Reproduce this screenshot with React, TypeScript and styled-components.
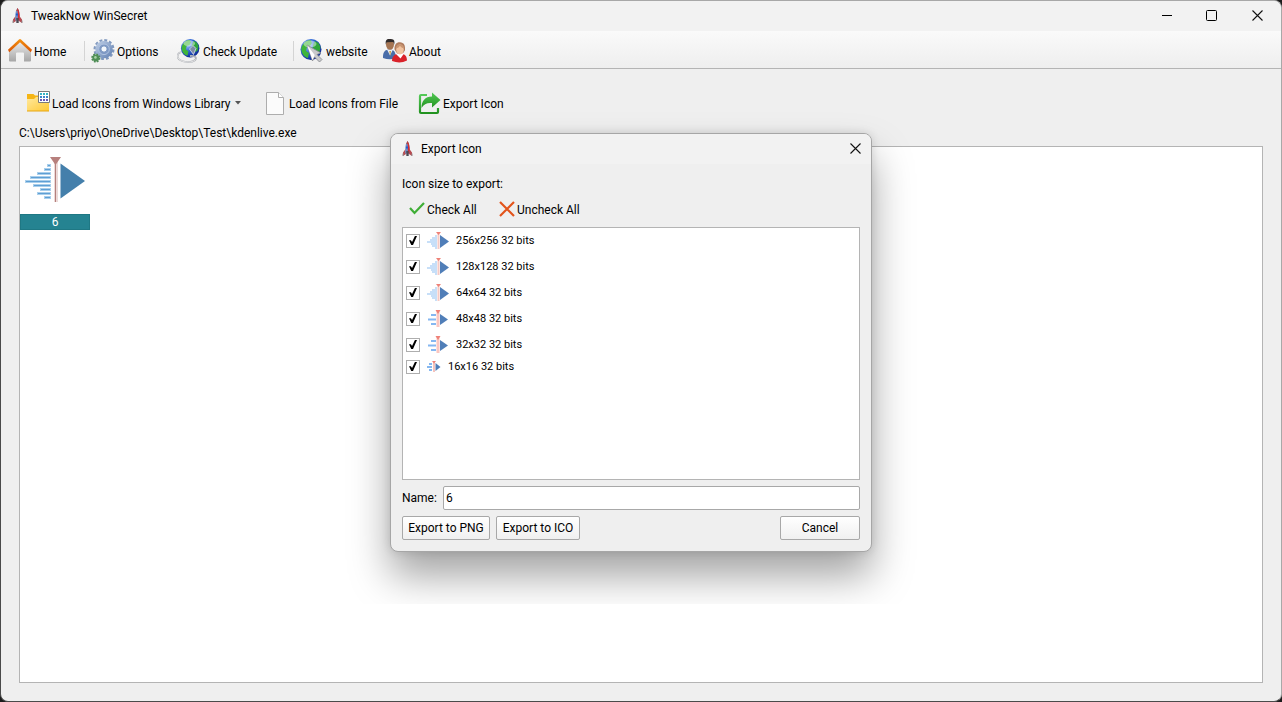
import React from "react";
import styled, { createGlobalStyle } from "styled-components";

const GlobalStyle = createGlobalStyle`
  * { box-sizing: border-box; }
  body {
    margin: 0;
    background: #1c1c1c;
    font: 12px/16px Roboto, "Noto Sans", sans-serif;
    color: #000;
  }
  button, input { font: inherit; color: inherit; }
`;

const Window = styled.div`
  display: flex;
  flex-direction: column;
  min-height: 100vh;
  border: 1px solid #4a4a4a;
  border-top-color: #a8a8a8;
  border-right-color: #a8a8a8;
  border-radius: 8px;
  background: #efefef;
  overflow: hidden;
`;

const TitleBar = styled.header`
  display: flex;
  align-items: center;
  height: 30px;
  padding-left: 11px;
  background: #f2f2f2;
`;

const Title = styled.h1`
  flex: 1;
  margin: 0 0 0 8px;
  font-size: 12px;
  font-weight: 400;
`;

const CaptionButton = styled.button<{ $width: number }>`
  display: grid;
  place-items: center;
  width: ${(p) => p.$width}px;
  height: 30px;
  padding: 0 1px 2px 0;
  border: 0;
  background: none;
`;

const MenuBar = styled.nav`
  display: flex;
  align-items: center;
  height: 38px;
  padding: 2px 7px 0;
  border-bottom: 1px solid #b4b4b4;
  background: linear-gradient(#fafafa, #eeeeee);
`;

const Tool = styled.button<{ $width?: number; $gap?: number }>`
  display: flex;
  flex: none;
  align-items: center;
  gap: ${(p) => p.$gap ?? 2}px;
  width: ${(p) => (p.$width ? `${p.$width}px` : "auto")};
  height: 26px;
  padding: 0;
  border: 0;
  background: none;
  white-space: nowrap;
  svg { flex: none; }
  span { padding-top: 2px; }
`;

const Divider = styled.span`
  width: 1px;
  height: 20px;
  margin-right: 6px;
  background: #d4d4d4;
`;

const Main = styled.main`
  display: flex;
  flex: 1;
  flex-direction: column;
  padding: 21px 18px 18px;
`;

const Actions = styled.div`
  display: flex;
  padding-left: 7px;
`;

const Path = styled.p`
  margin: 9px 0 5px;
`;

const Gallery = styled.section`
  flex: 1;
  border: 1px solid #b4b4b4;
  background: #fff;
`;

const Tile = styled.figure`
  display: flex;
  flex-direction: column;
  align-items: center;
  width: 70px;
  margin: 0;
  padding-top: 8px;
`;

const TileName = styled.figcaption`
  align-self: stretch;
  margin-top: 11px;
  border: 1px solid #1f7884;
  background: #258391;
  color: #fff;
  line-height: 14px;
  text-align: center;
`;

/* Limits how far the dialog's shadow reaches. */
const DialogLayer = styled.div`
  position: absolute;
  top: 94px;
  left: 331px;
  padding: 39px 59px 52px;
  overflow: hidden;
  pointer-events: none;
`;

const Dialog = styled.section`
  width: 482px;
  border: 1px solid #a6a6a6;
  border-radius: 8px;
  background: #efefef;
  box-shadow: 0 24px 40px rgba(0, 0, 0, 0.36), 0 0 10px rgba(0, 0, 0, 0.12);
  pointer-events: auto;
`;

const DialogBar = styled(TitleBar)`
  border-radius: 7px 7px 0 0;
`;

const DialogTitle = styled(Title).attrs({ as: "h2" })``;

const DialogBody = styled.form`
  display: flex;
  flex-direction: column;
  padding: 12px 11px 11px;
`;

const Checks = styled.div`
  display: flex;
  margin: 0 0 5px;
  padding: 4px 0 0 7px;
`;

const SizeList = styled.ul`
  height: 253px;
  margin: 0;
  padding: 0 3px;
  border: 1px solid #b4b4b4;
  background: #fff;
  font-size: 11px;
  list-style: none;
`;

const SizeRow = styled.li<{ $small?: boolean }>`
  height: ${(p) => (p.$small ? 18 : 26)}px;
  label {
    display: flex;
    align-items: center;
    gap: 7px;
    height: 100%;
  }
`;

const Tick = styled.input.attrs({ type: "checkbox" })`
  appearance: none;
  width: 14px;
  height: 14px;
  margin: 0;
  border: 1px solid #aeaeae;
  background: #fff;
  &:checked::after {
    content: "";
    display: block;
    width: 8px;
    height: 9px;
    margin: 1px 2px;
    background: #000;
    clip-path: polygon(0 48%, 24% 48%, 38% 66%, 74% 0, 100% 0, 50% 100%, 28% 100%);
  }
`;

const NameRow = styled.div`
  display: flex;
  align-items: center;
  gap: 6px;
  margin: 6px 0;
  label { width: 35px; }
`;

const NameInput = styled.input`
  flex: 1;
  min-width: 0;
  height: 24px;
  padding: 0 2px;
  border: 1px solid #a8a8a8;
  border-radius: 2px;
  background: #fff;
  outline: none;
`;

const Footer = styled.div`
  display: flex;
  gap: 6px;
`;

const PushButton = styled.button<{ $width: number; $end?: boolean }>`
  width: ${(p) => p.$width}px;
  height: 24px;
  margin-left: ${(p) => (p.$end ? "auto" : 0)};
  padding: 0;
  border: 1px solid #a8a8a8;
  border-radius: 2px;
  background: linear-gradient(#ffffff, #f0f0f0);
  white-space: nowrap;
`;

const Rocket = () => (
  <svg width="11" height="16" viewBox="0 0 11 16" aria-hidden="true">
    <path d="M3.6 8 1 11.5V15l3-2zM7.4 8 10 11.5V15l-3-2z" fill="#b64b50" />
    <path d="M1 12.5V15M10 12.5V15" stroke="#8d8d90" />
    <path d="M5.5 0C3.5 3 3 6 3.3 12.5h4.4C8 6 7.5 3 5.5 0z" fill="#6d8cc4" />
    <path d="M5.5 0C6.8 2 8 5 7.7 12.5H6z" fill="#d82a2e" />
    <path d="M5.5 0 4.2 3h2.6z" fill="#b9433f" />
    <path d="M4 5.5h2v2H4z" fill="#245bd0" />
    <path d="M4.3 10h2.4v5H4.3z" fill="#4d4b55" />
  </svg>
);

const HomeIcon = () => (
  <svg width="24" height="24" viewBox="0 0 24 24" aria-hidden="true">
    <defs>
      <linearGradient id="wall" x2="0" y2="1"><stop stopColor="#ececec" /><stop offset="1" stopColor="#a6a6a6" /></linearGradient>
      <linearGradient id="roof" x2="0" y2="1"><stop stopColor="#f5930f" /><stop offset="1" stopColor="#d95405" /></linearGradient>
    </defs>
    <path d="M12 2.500 1 12v9.500q0 1 1 1H8v-8q0-1 1-1h6q1 0 1 1v8h6q1 0 1-1V12z" fill="url(#wall)" />
    <path d="M0 10.800 11 .500q1-.9 2 0l11 10.300-1.200 2.400L12 3.300 1.200 13.200z" fill="url(#roof)" />
  </svg>
);

const GearIcon = () => (
  <svg width="24" height="24" viewBox="0 0 24 24" aria-hidden="true">
    <defs>
      <linearGradient id="gear" x2="1" y2="1"><stop stopColor="#c3d2e8" /><stop offset="1" stopColor="#5f7fb2" /></linearGradient>
    </defs>
    <circle cx="13" cy="10.500" r="9.300" fill="none" stroke="#8199bf" strokeWidth="2.400" strokeDasharray="2.900 1.970" />
    <circle cx="13" cy="10.500" r="8.700" fill="url(#gear)" />
    <circle cx="13" cy="10.300" r="5.300" fill="#7f9ac6" stroke="#afc2df" />
    <circle cx="13" cy="10" r="3.200" fill="#f2f6fb" stroke="#6f8dbb" />
    <circle cx="4.800" cy="19" r="3.600" fill="none" stroke="#4d8b54" strokeWidth="2" strokeDasharray="1.700 1.130" />
    <circle cx="4.800" cy="19" r="3.400" fill="#4f8f56" />
    <circle cx="4.400" cy="18.400" r="1.300" fill="#a9d3a5" />
  </svg>
);

const Globe = ({ id }: { id: string }) => (
  <>
    <defs>
      <radialGradient id={id} cx=".35" cy=".3" r=".8">
        <stop stopColor="#a8ccfb" /><stop offset=".45" stopColor="#2f66d4" /><stop offset="1" stopColor="#0a1f86" />
      </radialGradient>
    </defs>
    <circle cx="11" cy="10.500" r="10.500" fill={`url(#${id})`} />
    <path d="M2 7C4 3 7 1 10.500 1L12 4l-2 3-3 1-1 4 3 2-1 5C4 18 1 14 1.300 9z" fill="#3fb53a" />
    <path d="m15 2 3.500 2 2 4-1 5-3 2-1-4-3-2 1-4z" fill="#2fa63a" />
    <ellipse cx="10" cy="5" rx="6.500" ry="3.500" fill="#fff" opacity=".45" />
  </>
);

const UpdateIcon = () => (
  <svg width="24" height="24" viewBox="0 0 24 24" aria-hidden="true">
    <g transform="translate(3.500 0) scale(.88)"><Globe id="sea-a" /></g>
    <path d="M4 13C-1 15-.5 20 5 22s12 1 13.500-1.500S17 16.500 13 17" fill="none" stroke="#b0b3b8" strokeWidth="1.800" />
    <path d="M4 13C-1 15-.5 20 5 22s12 1 13.500-1.500" fill="none" stroke="#f6f6f6" strokeWidth=".7" />
    <path d="M12.500 10 16 6.500l3 3-2.500 6z" fill="#7d8aa5" stroke="#dde2ec" strokeWidth=".8" />
  </svg>
);

const WebsiteIcon = () => (
  <svg width="24" height="24" viewBox="0 0 24 24" aria-hidden="true">
    <Globe id="sea-b" />
    <path d="m7 6 14 8-4 1.500 5 5-2.500 2.500-5-5-2 4z" fill="#c9cacc" stroke="#85888e" strokeWidth=".8" />
    <path d="m7 6 5.500 15 2.200-5z" fill="#fff" />
  </svg>
);

const PeopleIcon = () => (
  <svg width="24" height="24" viewBox="0 0 24 24" aria-hidden="true">
    <path d="M0 19c-.3-6 2-8.500 6.500-8.500s6 2 6.500 8.500q-6 2.500-13 0z" fill="#496da9" />
    <path d="m4 10.500 3 6 3-6z" fill="#e9eef5" />
    <path d="M6.300 12H8l-.8 5z" fill="#c79b35" />
    <ellipse cx="7" cy="5.500" rx="4" ry="5.200" fill="#a57553" />
    <path d="M2.800 5.500C2 .5 4.500-.6 7.500 0 11 0 12 1.500 11.200 5.500l-1-2.500-6.500.3z" fill="#302b2b" />
    <path d="M11.500 10.500c-.3-5 2-7.500 5.500-7.300 4 .2 5.500 3 5 8l-2 3h-6z" fill="#b17d5f" />
    <path d="M9 22c0-5 3-7.500 8-7.500 4.500 0 6.700 2 7 7q-7 3.500-15 .5z" fill="#d9222a" />
    <path d="m13 15 4.500 4.500L21 14.500z" fill="#fff" />
    <ellipse cx="17" cy="10.500" rx="3.800" ry="5" fill="#f1c3a0" />
    <path d="M13 9.500c0-3.500 2-4.500 4.500-4 2 .2 3.500 1.500 3.500 4-2-.5-3-1.500-4-2.800q-1 2-4 2.800z" fill="#c99672" />
  </svg>
);

const FolderIcon = () => (
  <svg width="24" height="24" viewBox="0 0 24 24" aria-hidden="true">
    <defs>
      <linearGradient id="folder" x2="1" y2="1"><stop stopColor="#ffe9a0" /><stop offset="1" stopColor="#ffc933" /></linearGradient>
    </defs>
    <path d="M1 3h6.500L9 4.500h13V19H1z" fill="#f5b515" />
    <path d="M1 8h7l2-2h13v14H1z" fill="url(#folder)" />
    <path d="M1 20h22" stroke="#e8a713" />
    <path d="M12.500.5h11v11h-11z" fill="#fff" stroke="#7b7b7b" />
    <path d="M14 3h8" stroke="#35b2c4" strokeWidth="2" strokeDasharray="2 1" />
    <path d="M14 6h8" stroke="#3c83c9" strokeWidth="2" strokeDasharray="2 1" />
    <path d="M14 9h8" stroke="#6859b4" strokeWidth="2" strokeDasharray="2 1" />
  </svg>
);

const FileIcon = () => (
  <svg width="18" height="23" viewBox="0 0 18 23" aria-hidden="true">
    <path d="M.5.5h12l5 5v17H.5z" fill="#fbfbfb" stroke="#adadad" />
    <path d="M12.500.5v5h5" fill="#fff" stroke="#adadad" />
  </svg>
);

const ExportIcon = () => (
  <svg width="23" height="23" viewBox="0 0 23 23" aria-hidden="true">
    <defs>
      <linearGradient id="export" x2="0" y2="1"><stop stopColor="#54c957" /><stop offset="1" stopColor="#229320" /></linearGradient>
    </defs>
    <path d="M9 3H3Q2 3 2 4v16q0 1 1 1h16q1 0 1-1v-4" fill="none" stroke="url(#export)" strokeWidth="2.200" />
    <path d="M14 .5 22.500 8 14 15.500V11C9 10.500 6 12 3.500 16 3.500 9 7 4.500 14 4.500z" fill="url(#export)" />
  </svg>
);

const CheckMark = () => (
  <svg width="16" height="14" viewBox="0 0 16 14" aria-hidden="true">
    <path d="m1 6 4.500 5L15 1" fill="none" stroke="#3fae36" strokeWidth="2.200" />
  </svg>
);

const CrossMark = () => (
  <svg width="16" height="16" viewBox="0 0 16 16" aria-hidden="true">
    <path d="m1 1 14 14M15 1 1 15" stroke="#e2541b" strokeWidth="2.200" />
  </svg>
);

const CloseGlyph = () => (
  <svg width="11" height="11" viewBox="0 0 11 11" aria-hidden="true">
    <path d="m.5.5 10 10m0-10-10 10" stroke="#111" strokeWidth="1.100" />
  </svg>
);

const bars: [number, number][] = [
  [22, 8], [19, 12], [12, 16], [5, 20], [0, 24], [8, 28], [15, 32], [12, 36], [19, 40],
];

const KdenliveLarge = () => (
  <svg width="62" height="48" viewBox="0 0 62 48" aria-hidden="true">
    {bars.map(([x, y]) => (
      <React.Fragment key={y}>
        <path d={`M${x + 1} ${y + 2.5}H27`} stroke="#a9cfec" strokeWidth="3" />
        <path d={`M${x + 2} ${y + 2.5}H26`} stroke="#5f9fd4" />
      </React.Fragment>
    ))}
    <path d="M32 4v43" stroke="#ecd9d7" strokeWidth="4" />
    <path d="M31.500 4v43" stroke="#b4807d" />
    <path d="M26 2h11l-5.500 8z" fill="#b7807d" />
    <path d="M36.500 8.500 61 26 36.500 43.500z" fill="#447fab" />
  </svg>
);

const KdenliveSmall = ({ size }: { size: number }) => {
  if (size === 16)
    return (
      <svg width="14" height="14" viewBox="0 0 14 14" aria-hidden="true">
        <path d="M2 4h3M0 7h5M2 10h3" stroke="#86b8f0" strokeWidth="1.800" />
        <path d="M7 2v10" stroke="#f5c3be" strokeWidth="2" />
        <path d="M5 1h4L7 3.500z" fill="#ee8177" />
        <path d="M8.500 3v8l5-4z" fill="#507eb8" />
      </svg>
    );
  if (size < 64)
    return (
      <svg width="22" height="18" viewBox="0 0 22 18" aria-hidden="true">
        <path d="M4 5h5M1 9.500h8M4 14h5" stroke="#85b7f1" strokeWidth="2.200" />
        <path d="M11 1v16" stroke="#fac6c1" strokeWidth="3" />
        <path d="M8.500 0h5L11 4z" fill="#ef8178" />
        <path d="M13 4v11l8-5.500z" fill="#507eb8" />
      </svg>
    );
  return (
    <svg width="22" height="18" viewBox="0 0 22 18" aria-hidden="true">
      <path d="M8 4h2M5 6h5M3 8h7M0 10h10M4 12h6M5 14h5M8 16h2" stroke="#8fbff2" strokeWidth="1.100" />
      <path d="M11.500 1v16" stroke="#f5cac5" strokeWidth="2" />
      <path d="M9 0h5l-2.500 3z" fill="#ee8177" />
      <path d="M13 3v13l9-6.500z" fill="#507eb8" />
    </svg>
  );
};

const sizes = [256, 128, 64, 48, 32, 16];

export default function App() {
  return (
    <>
      <GlobalStyle />
      <Window>
        <TitleBar>
          <Rocket />
          <Title>TweakNow WinSecret</Title>
          <CaptionButton $width={44} aria-label="Minimize">
            <svg width="10" height="10" viewBox="0 0 10 10"><path d="M0 5.500h10" stroke="#000" /></svg>
          </CaptionButton>
          <CaptionButton $width={46} aria-label="Maximize">
            <svg width="11" height="11" viewBox="0 0 11 11"><rect x=".5" y=".5" width="10" height="10" rx="1" fill="none" stroke="#000" /></svg>
          </CaptionButton>
          <CaptionButton $width={46} aria-label="Close"><CloseGlyph /></CaptionButton>
        </TitleBar>
        <MenuBar>
          <Tool $width={76}><HomeIcon /><span>Home</span></Tool>
          <Divider />
          <Tool $width={86}><GearIcon /><span>Options</span></Tool>
          <Tool $width={116}><UpdateIcon /><span>Check Update</span></Tool>
          <Divider />
          <Tool $width={83}><WebsiteIcon /><span>website</span></Tool>
          <Tool><PeopleIcon /><span>About</span></Tool>
        </MenuBar>
        <Main>
          <Actions>
            <Tool $width={240}>
              <FolderIcon /><span>Load Icons from Windows Library</span>
              <svg width="10" height="6" viewBox="0 0 10 6" aria-hidden="true"><path d="M2 1h6L5 4.500z" fill="#555" /></svg>
            </Tool>
            <Tool $width={152} $gap={5}><FileIcon /><span>Load Icons from File</span></Tool>
            <Tool><ExportIcon /><span>Export Icon</span></Tool>
          </Actions>
          <Path>C:\Users\priyo\OneDrive\Desktop\Test\kdenlive.exe</Path>
          <Gallery>
            <Tile>
              <KdenliveLarge />
              <TileName>6</TileName>
            </Tile>
          </Gallery>
        </Main>
      </Window>
      <DialogLayer>
        <Dialog role="dialog" aria-labelledby="dialog-title">
          <DialogBar>
            <Rocket />
            <DialogTitle id="dialog-title">Export Icon</DialogTitle>
            <CaptionButton $width={30} aria-label="Close"><CloseGlyph /></CaptionButton>
          </DialogBar>
          <DialogBody onSubmit={(e) => e.preventDefault()}>
            <div>Icon size to export:</div>
            <Checks>
              <Tool type="button" $width={90}><CheckMark /><span>Check All</span></Tool>
              <Tool type="button"><CrossMark /><span>Uncheck All</span></Tool>
            </Checks>
            <SizeList>
              {sizes.map((s) => (
                <SizeRow key={s} $small={s === 16}>
                  <label>
                    <Tick defaultChecked />
                    <KdenliveSmall size={s} />
                    {`${s}x${s} 32 bits`}
                  </label>
                </SizeRow>
              ))}
            </SizeList>
            <NameRow>
              <label htmlFor="icon-name">Name:</label>
              <NameInput id="icon-name" defaultValue="6" />
            </NameRow>
            <Footer>
              <PushButton type="button" $width={88}>Export to PNG</PushButton>
              <PushButton type="button" $width={84}>Export to ICO</PushButton>
              <PushButton type="button" $width={80} $end>Cancel</PushButton>
            </Footer>
          </DialogBody>
        </Dialog>
      </DialogLayer>
    </>
  );
}
